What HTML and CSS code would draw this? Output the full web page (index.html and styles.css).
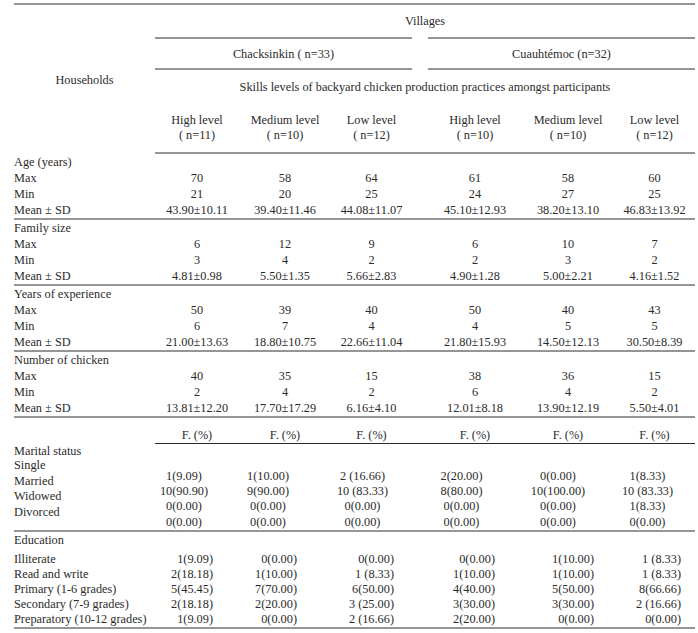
FILE: index.html
```html
<!DOCTYPE html>
<html>
<head>
<meta charset="utf-8">
<link rel="stylesheet" href="styles.css">
</head>
<body>
<table class="tbl">
  <colgroup>
    <col class="w-lab"><col class="w-c1"><col class="w-c2"><col class="w-c3"><col class="w-gap"><col class="w-c4"><col class="w-c5"><col class="w-c6">
  </colgroup>
  <tbody>
    <tr class="h1">
      <td class="hh" rowspan="4">Households</td>
      <td colspan="7">Villages</td>
    </tr>
    <tr class="h2">
      <td colspan="3" class="seg">Chacksinkin ( n=33)</td>
      <td class="gap"></td>
      <td colspan="3" class="seg">Cuauhtémoc (n=32)</td>
    </tr>
    <tr class="h3">
      <td colspan="7">Skills levels of backyard chicken production practices amongst participants</td>
    </tr>
    <tr class="h4">
      <td>High level<br>( n=11)</td>
      <td>Medium level<br>( n=10)</td>
      <td>Low level<br>( n=12)</td>
      <td class="gap"></td>
      <td>High level<br>( n=10)</td>
      <td>Medium level<br>( n=10)</td>
      <td>Low level<br>( n=12)</td>
    </tr>

    <tr><td class="lab">Age (years)</td><td></td><td></td><td></td><td></td><td></td><td></td><td></td></tr>
    <tr><td class="lab">Max</td><td>70</td><td>58</td><td>64</td><td></td><td>61</td><td>58</td><td>60</td></tr>
    <tr><td class="lab">Min</td><td>21</td><td>20</td><td>25</td><td></td><td>24</td><td>27</td><td>25</td></tr>
    <tr class="end"><td class="lab">Mean ± SD</td><td>43.90±10.11</td><td>39.40±11.46</td><td>44.08±11.07</td><td></td><td>45.10±12.93</td><td>38.20±13.10</td><td>46.83±13.92</td></tr>

    <tr><td class="lab">Family size</td><td></td><td></td><td></td><td></td><td></td><td></td><td></td></tr>
    <tr><td class="lab">Max</td><td>6</td><td>12</td><td>9</td><td></td><td>6</td><td>10</td><td>7</td></tr>
    <tr><td class="lab">Min</td><td>3</td><td>4</td><td>2</td><td></td><td>2</td><td>3</td><td>2</td></tr>
    <tr class="end"><td class="lab">Mean ± SD</td><td>4.81±0.98</td><td>5.50±1.35</td><td>5.66±2.83</td><td></td><td>4.90±1.28</td><td>5.00±2.21</td><td>4.16±1.52</td></tr>

    <tr><td class="lab">Years of experience</td><td></td><td></td><td></td><td></td><td></td><td></td><td></td></tr>
    <tr><td class="lab">Max</td><td>50</td><td>39</td><td>40</td><td></td><td>50</td><td>40</td><td>43</td></tr>
    <tr><td class="lab">Min</td><td>6</td><td>7</td><td>4</td><td></td><td>4</td><td>5</td><td>5</td></tr>
    <tr class="end"><td class="lab">Mean ± SD</td><td>21.00±13.63</td><td>18.80±10.75</td><td>22.66±11.04</td><td></td><td>21.80±15.93</td><td>14.50±12.13</td><td>30.50±8.39</td></tr>

    <tr><td class="lab">Number of chicken</td><td></td><td></td><td></td><td></td><td></td><td></td><td></td></tr>
    <tr><td class="lab">Max</td><td>40</td><td>35</td><td>15</td><td></td><td>38</td><td>36</td><td>15</td></tr>
    <tr><td class="lab">Min</td><td>2</td><td>4</td><td>2</td><td></td><td>6</td><td>4</td><td>2</td></tr>
    <tr class="end"><td class="lab">Mean ± SD</td><td>13.81±12.20</td><td>17.70±17.29</td><td>6.16±4.10</td><td></td><td>12.01±8.18</td><td>13.90±12.19</td><td>5.50±4.01</td></tr>

    <tr class="frow"><td class="lab"></td><td>F. (%)</td><td>F. (%)</td><td>F. (%)</td><td></td><td>F. (%)</td><td>F. (%)</td><td>F. (%)</td></tr>

    <tr class="sub"><td class="lab">Marital status</td><td></td><td></td><td></td><td></td><td></td><td></td><td></td></tr>
    <tr class="end marital">
      <td class="lab stack"><div>Single</div><div>Married</div><div>Widowed</div><div>Divorced</div></td>
      <td class="rv"><div>1(9.09)</div><div>10(90.90)</div><div>0(0.00)</div><div>0(0.00)</div></td>
      <td class="rv"><div>1(10.00)</div><div>9(90.00)</div><div>0(0.00)</div><div>0(0.00)</div></td>
      <td class="rv"><div>2 (16.66)</div><div>10 (83.33)</div><div>0(0.00)</div><div>0(0.00)</div></td>
      <td></td>
      <td class="rv"><div>2(20.00)</div><div>8(80.00)</div><div>0(0.00)</div><div>0(0.00)</div></td>
      <td class="rv"><div>0(0.00)</div><div>10(100.00)</div><div>0(0.00)</div><div>0(0.00)</div></td>
      <td class="rv"><div>1(8.33)</div><div>10 (83.33)</div><div>1(8.33)</div><div>0(0.00)</div></td>
    </tr>

    <tr class="edu-head"><td class="lab">Education</td><td></td><td></td><td></td><td></td><td></td><td></td><td></td></tr>
    <tr class="edu"><td class="lab">Illiterate</td><td>1(9.09)</td><td>0(0.00)</td><td>0(0.00)</td><td></td><td>0(0.00)</td><td>1(10.00)</td><td>1 (8.33)</td></tr>
    <tr class="edu"><td class="lab">Read and write</td><td>2(18.18)</td><td>1(10.00)</td><td>1 (8.33)</td><td></td><td>1(10.00)</td><td>1(10.00)</td><td>1 (8.33)</td></tr>
    <tr class="edu"><td class="lab">Primary (1-6 grades)</td><td>5(45.45)</td><td>7(70.00)</td><td>6(50.00)</td><td></td><td>4(40.00)</td><td>5(50.00)</td><td>8(66.66)</td></tr>
    <tr class="edu"><td class="lab">Secondary (7-9 grades)</td><td>2(18.18)</td><td>2(20.00)</td><td>3 (25.00)</td><td></td><td>3(30.00)</td><td>3(30.00)</td><td>2 (16.66)</td></tr>
    <tr class="edu end"><td class="lab">Preparatory (10-12 grades)</td><td>1(9.09)</td><td>0(0.00)</td><td>2 (16.66)</td><td></td><td>2(20.00)</td><td>0(0.00)</td><td>0(0.00)</td></tr>
  </tbody>
</table>
</body>
</html>
```

FILE: styles.css
```css
html, body {
  margin: 0;
  padding: 0;
  background: #ffffff;
}

body {
  color: #2b2b2b;
  font-family: "Liberation Serif", "Times New Roman", serif;
  font-size: 12.3px;
}

.tbl {
  margin: 3px 0 0 14px;
  width: 681px;
  table-layout: fixed;
  border-collapse: separate;
  border-spacing: 0;
}

.w-lab { width: 141px; }
.w-c1 { width: 84px; }
.w-c2 { width: 92px; }
.w-c3 { width: 81px; }
.w-gap { width: 16px; }
.w-c4 { width: 94px; }
.w-c5 { width: 92px; }
.w-c6 { width: 81px; }

.tbl td {
  padding: 0;
  line-height: 16px;
  white-space: nowrap;
  text-align: center;
  vertical-align: middle;
}

.tbl td.lab {
  text-align: left;
}

/* header */
.h1 td {
  border-top: 2px solid #959595;
  height: 32px;
}

.tbl td.hh {
  vertical-align: middle;
}

.h2 td.seg {
  border-top: 2px solid #959595;
  border-bottom: 2px solid #959595;
  height: 29px;
}

.h3 td {
  height: 34px;
  vertical-align: top;
  padding-top: 9px;
  box-sizing: border-box;
}

.h4 td {
  height: 50px;
  box-sizing: border-box;
  vertical-align: top;
  padding-top: 9px;
  line-height: 15px;
  border-bottom: 2px solid #959595;
}

/* groups */
.end td {
  border-bottom: 2px solid #959595;
}

.frow td {
  padding-top: 9px;
  border-bottom: 1px solid #2b2b2b;
}

.frow td.lab {
  border-bottom: none;
}

.sub td {
  line-height: 14px;
}

.marital td {
  vertical-align: top;
}

.marital td.stack {
  padding-top: 0;
  padding-bottom: 5px;
}

.marital td.stack div {
  line-height: 15.7px;
}

.marital td.rv div {
  line-height: 15.2px;
}

.marital td.rv {
  padding-top: 11px;
}

.edu-head td {
  line-height: 16px;
  padding-bottom: 4px;
}

.edu td {
  line-height: 15px;
}

.rv,
.edu td {
  text-align: right;
}

.tbl tr.marital td:nth-child(2), .tbl tr.edu td:nth-child(2) { padding-right: 26px; }
.tbl tr.marital td:nth-child(3), .tbl tr.edu td:nth-child(3) { padding-right: 34px; }
.tbl tr.marital td:nth-child(4), .tbl tr.edu td:nth-child(4) { padding-right: 18px; }
.tbl tr.marital td:nth-child(6), .tbl tr.edu td:nth-child(6) { padding-right: 27px; }
.tbl tr.marital td:nth-child(7), .tbl tr.edu td:nth-child(7) { padding-right: 20px; }
.tbl tr.marital td:nth-child(8), .tbl tr.edu td:nth-child(8) { padding-right: 14px; }
```
